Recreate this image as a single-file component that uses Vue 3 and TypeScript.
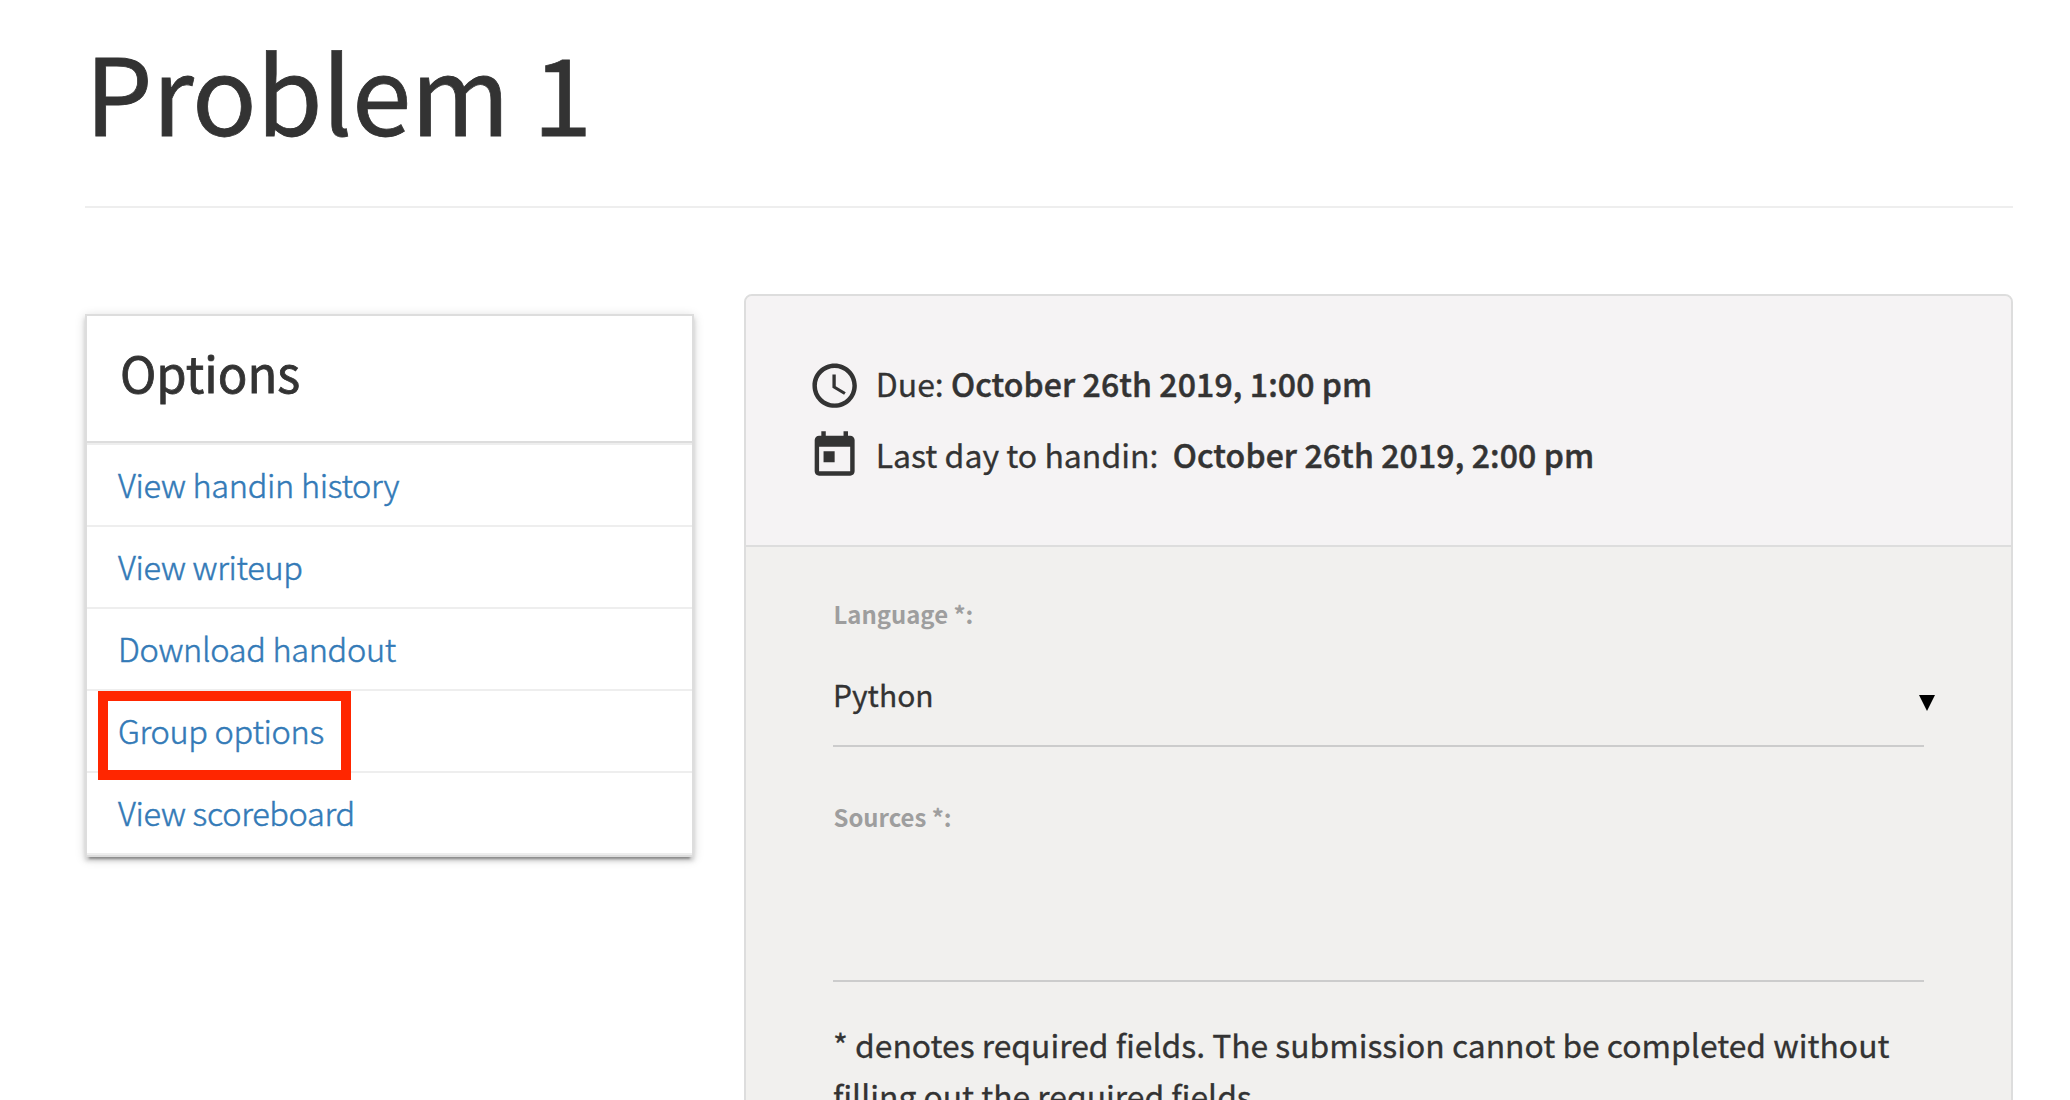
<script setup lang="ts">
interface Option { label: string; highlighted?: boolean }
const options: Option[] = [
  { label: 'View handin history' },
  { label: 'View writeup' },
  { label: 'Download handout' },
  { label: 'Group options', highlighted: true },
  { label: 'View scoreboard' },
]
</script>

<template>
  <div class="page">
    <h1>Problem 1</h1>
    <div class="columns">
      <aside class="options">
        <h2>Options</h2>
        <nav>
          <a v-for="o in options" :key="o.label" class="option">
            <span>{{ o.label }}</span>
            <i v-if="o.highlighted" class="mark"></i>
          </a>
        </nav>
      </aside>
      <main class="card">
        <header class="dates">
          <div class="date">
            <svg viewBox="0 0 24 24"><path d="M11.99 2C6.47 2 2 6.48 2 12s4.47 10 9.99 10C17.52 22 22 17.52 22 12S17.52 2 11.99 2zM12 20c-4.42 0-8-3.58-8-8s3.58-8 8-8 8 3.58 8 8-3.58 8-8 8zm.5-13H11v6l5.25 3.15.75-1.23-4.5-2.67z" /></svg>
            <span>Due: <b>October 26th 2019, 1:00 pm</b></span>
          </div>
          <div class="date">
            <svg viewBox="0 0 24 24"><path d="M19 3h-1V1h-2v2H8V1H6v2H5c-1.11 0-1.99.9-1.99 2L3 19c0 1.1.89 2 2 2h14c1.1 0 2-.9 2-2V5c0-1.1-.9-2-2-2zm0 16H5V8h14v11zM7 10h5v5H7z" /></svg>
            <span>Last day to handin:&nbsp; <b>October 26th 2019, 2:00 pm</b></span>
          </div>
        </header>
        <section class="form">
          <label>Language *:</label>
          <div class="select"><span>Python</span><svg class="caret" viewBox="0 0 16 16"><path d="M0 0h16L8 16z" /></svg></div>
          <label class="sources">Sources *:</label>
          <div class="file"></div>
          <p>* denotes required fields. The submission cannot be completed without<br>filling out the required fields.</p>
        </section>
      </main>
    </div>
  </div>
</template>

<style>
body { overflow: hidden; background: #fff; }
</style>
<style scoped>
* { box-sizing: border-box; }
.page { height: 1100px; overflow: hidden; padding: 0 57px 0 85px; color: #333; font-family: "Noto Sans CJK SC", sans-serif; -webkit-text-stroke: .3px currentColor; }
h1 { margin: 0; height: 208px; padding: 26px 0 0 0; border-bottom: 2px solid #eee; font-size: 107px; line-height: 128px; letter-spacing: -.5px; font-weight: 400; white-space: nowrap; -webkit-text-stroke-width: .8px; }
.columns { display: flex; align-items: flex-start; justify-content: space-between; padding-top: 86px; }
.options { width: 609px; margin-top: 20px; border: 2px solid #ddd; background: #fff; box-shadow: 0 4px 4px rgba(0, 0, 0, .14), 0 6px 2px -4px rgba(0, 0, 0, .3), 0 2px 10px rgba(0, 0, 0, .16); }
h2 { margin: 0; height: 127px; padding: 24px 0 0 33px; border-bottom: 2px solid #ddd; font-size: 49px; line-height: 64px; font-weight: 400; -webkit-text-stroke-width: .8px; }
nav { border-top: 2px solid #eee; }
.option { position: relative; display: block; height: 82px; padding-left: 31px; border-bottom: 2px solid #eee; color: #337ab7; font-size: 32.5px; line-height: 77px; letter-spacing: -.32px; font-weight: 300; -webkit-text-stroke-width: .5px; }
.mark { position: absolute; z-index: 1; left: 11px; top: 0; width: 253px; height: 89px; border: 10px solid #ff2600; }
.card { width: 1269px; height: 900px; border: 2px solid #ddd; border-radius: 8px; background: #f1f0ee; overflow: hidden; }
.dates { height: 251px; padding: 55px 0 0 62px; border-bottom: 2px solid #ddd; background: #f5f3f4; }
.date { display: flex; height: 70.5px; font-size: 32px; line-height: 64px; white-space: nowrap; }
.date svg { width: 53.3px; height: 53.3px; margin: 7.8px 14.4px 0 0; fill: #333; }
b { font-weight: 500; letter-spacing: .12px; -webkit-text-stroke-width: .5px; }
.form { padding: 47px 87px 0; }
label { display: block; height: 40px; padding-left: .5px; color: #9e9e9e; font-size: 23.9px; line-height: 40px; font-weight: 700; -webkit-text-stroke-width: 0; }
.select { display: flex; justify-content: space-between; height: 113px; border-bottom: 2px solid #ccc; font-size: 30px; line-height: 120px; }
.caret { width: 16px; height: 16px; margin: 61px -11px 0 0; fill: #000; }
.sources { margin-top: 50px; }
.file { height: 145px; border-bottom: 2px solid #ccc; }
p { margin: 37px 0 0; font-size: 31.85px; line-height: 51px; white-space: nowrap; }
</style>
